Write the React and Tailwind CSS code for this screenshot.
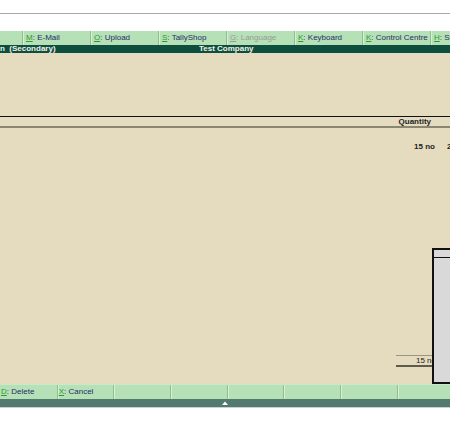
import React from "react";

const font = { fontFamily: '"Liberation Sans", Arial, sans-serif' };

function Key({ k, label, w, disabled }) {
  return (
    <div
      className={`${w} h-full shrink-0 flex items-center pl-[3px] border-l border-l-[#8fbf8f] shadow-[inset_1px_0_0_#d6efd6] whitespace-nowrap overflow-hidden text-[8px] leading-none ${
        disabled ? "text-[#9a9a9a]" : "text-[#1e2f6a]"
      }`}
    >
      {k ? (
        <>
          <span className={`underline ${disabled ? "text-[#9a9a9a]" : "text-[#2f9a2f]"}`}>{k}</span>
          <span>: {label}</span>
        </>
      ) : null}
    </div>
  );
}

export default function App() {
  const top = [
    { k: "M", label: "E-Mail" },
    { k: "O", label: "Upload" },
    { k: "S", label: "TallyShop" },
    { k: "G", label: "Language", disabled: true },
    { k: "K", label: "Keyboard" },
    { k: "K", label: "Control Centre" },
    { k: "H", label: "Support Centre" },
  ];
  const bottom = [
    { k: "D", label: "Delete" },
    { k: "X", label: "Cancel" },
    {}, {}, {}, {}, {}, {},
  ];
  return (
    <div className="w-[450px] h-[422px] bg-white overflow-hidden flex flex-col" style={font}>
      <div className="h-[14px] shrink-0 border-b border-b-[#a8a8a8]" />
      <div className="h-[17px] shrink-0" />
      {/* top button bar */}
      <div className="h-[14px] shrink-0 bg-[#b6e0b6] flex overflow-hidden">
        <div className="w-[22px] shrink-0 h-full" />
        {top.map((b, i) => (
          <Key key={i} {...b} w="w-[68px]" />
        ))}
      </div>
      {/* title bar */}
      <div className="h-[8px] shrink-0 bg-[#0e4e3f] relative overflow-hidden text-[8px] font-bold leading-[8px] text-[#f4f4ea] whitespace-pre">
        <div className="flex h-full">
          <span className="pl-[0px]">n  (Secondary)</span>
          <span className="absolute left-[199px] top-0">Test Company</span>
        </div>
      </div>
      {/* main area */}
      <div className="h-[331px] shrink-0 bg-[#e5dcc0] relative overflow-hidden flex flex-col">
        <div className="h-[63px] shrink-0" />
        <div className="h-[12px] shrink-0 border-t border-t-[#111] border-b-2 border-b-[#8a8672] flex items-center justify-end pr-[19px] text-[8px] font-bold text-[#222] leading-none">
          Quantity
        </div>
        <div className="h-[14px] shrink-0" />
        <div className="h-[9px] shrink-0 flex items-center text-[8px] font-bold text-[#222] leading-none whitespace-nowrap">
          <div className="flex-1" />
          <span>15 no</span>
          <span className="w-[15px] pl-[12px] overflow-hidden">2</span>
        </div>
        <div className="flex-1" />
        <div className="ml-auto mr-[14px] w-[40px] h-[12px] shrink-0 border-t border-t-[#9a9682] border-b-2 border-b-[#5e5b4e] flex items-center justify-end text-[8px] text-[#222] leading-none whitespace-nowrap">
          15 no
        </div>
        <div className="h-[17px] shrink-0" />
        {/* overlay sub-panel */}
        <div className="absolute left-[432px] top-[195px] w-[30px] h-[136px] bg-[#d9d9d9] border-2 border-[#111] flex flex-col">
          <div className="h-[8px] border-b border-b-[#111]" />
        </div>
      </div>
      {/* bottom button bar */}
      <div className="h-[15px] shrink-0 bg-[#b6e0b6] flex overflow-hidden border-t border-t-[#c9e9c9]">
        {bottom.map((b, i) => (
          <div
            key={i}
            className={`w-[56.7px] h-full shrink-0 flex items-center pl-[1px] whitespace-nowrap overflow-hidden text-[8px] leading-none text-[#1e2f6a] ${
              i > 0 ? "border-l border-l-[#8fbf8f] shadow-[inset_1px_0_0_#d6efd6]" : ""
            }`}
          >
            {b.k ? (
              <>
                <span className="underline text-[#2f9a2f]">{b.k}</span>
                <span>: {b.label}</span>
              </>
            ) : null}
          </div>
        ))}
      </div>
      {/* status strip */}
      <div className="h-[8px] shrink-0 bg-[#537a6e] flex items-center justify-center">
        <svg width="6" height="4" viewBox="0 0 6 4">
          <path d="M0 4 L3 0.5 L6 4 Z" fill="#ffffff" />
        </svg>
      </div>
      <div className="h-[1px] shrink-0 bg-[#cfcfcf]" />
      <div className="flex-1 bg-white" />
    </div>
  );
}
